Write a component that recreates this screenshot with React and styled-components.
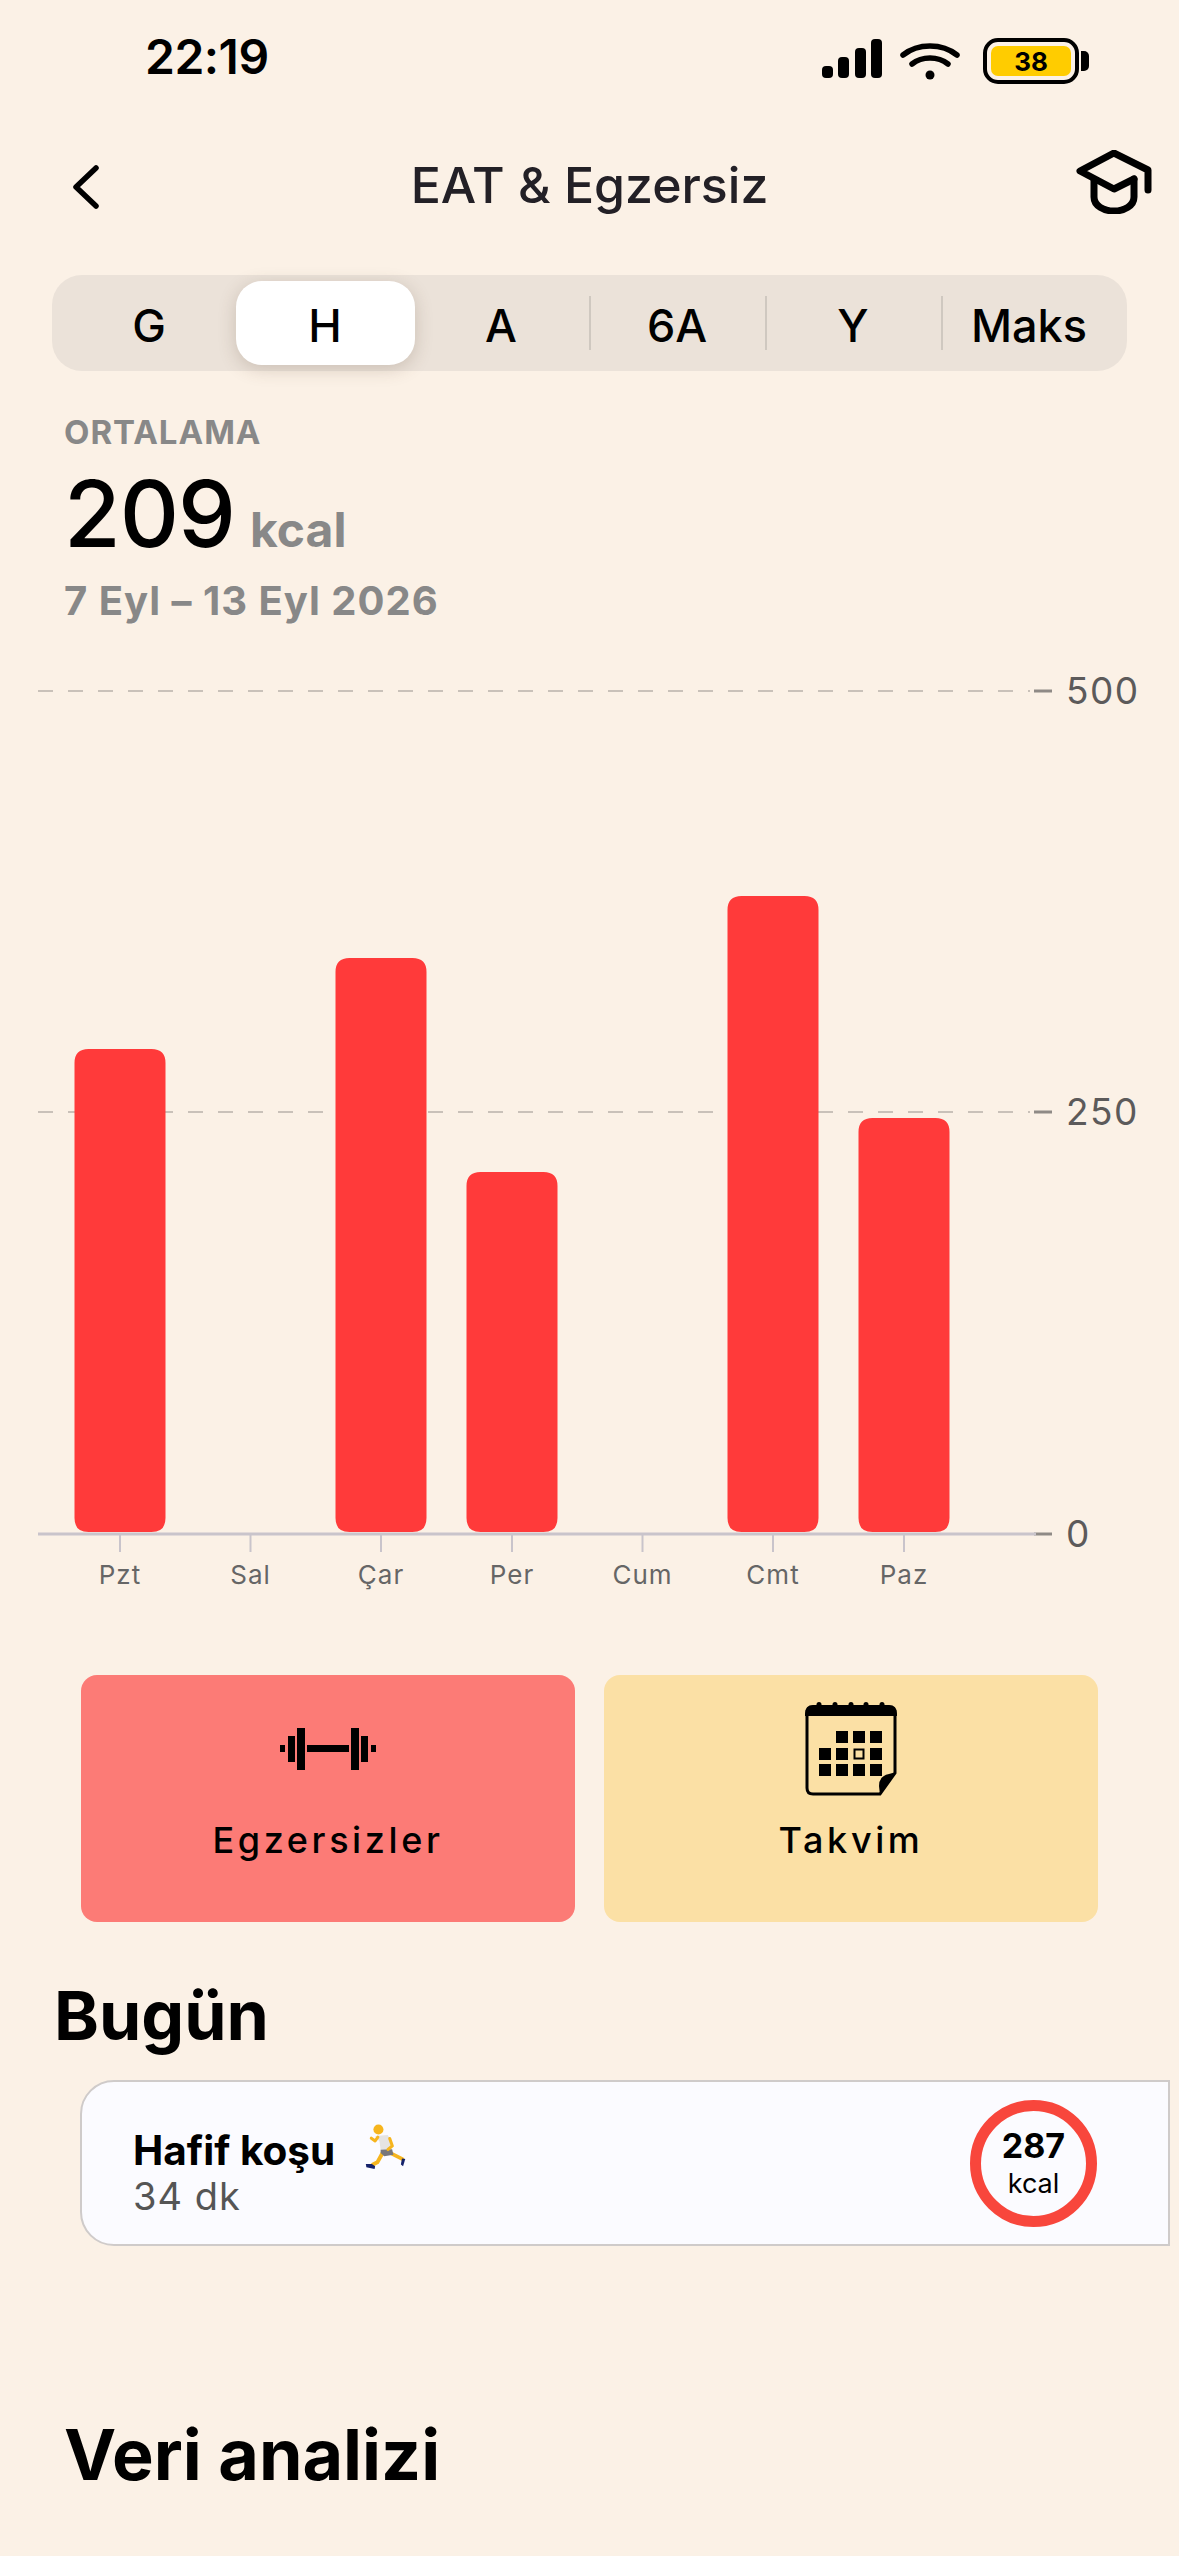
import React from 'react';
import styled, { createGlobalStyle } from 'styled-components';

const GlobalStyle = createGlobalStyle`
  html, body {
    margin: 0;
    padding: 0;
    background: #fbf1e6;
  }
  * { box-sizing: border-box; }
`;

const Page = styled.div`
  width: 1179px;
  height: 2556px;
  overflow: hidden;
  background: #fbf1e6;
  font-family: Inter, "Liberation Sans", sans-serif;
  color: #000;
`;

const StatusBar = styled.div`
  height: 110px;
  padding: 33px 100px 0 145px;
  display: flex;
  justify-content: space-between;
  align-items: flex-start;
`;

const Time = styled.div`
  font-size: 48px;
  line-height: 48px;
  font-weight: 600;
  letter-spacing: -0.5px;
`;

const StatusIcons = styled.div`
  display: flex;
  align-items: flex-start;
  margin-top: 5px;
`;

const Battery = styled.div`
  position: relative;
  width: 96px;
  height: 46px;
  margin-left: 23px;
  border: 4px solid #000;
  border-radius: 15px;
  padding: 4px;
  &::after {
    content: '';
    position: absolute;
    right: -14px;
    top: 9px;
    width: 8px;
    height: 20px;
    background: #000;
    border-radius: 0 5px 5px 0;
  }
`;

const BatteryFill = styled.div`
  height: 100%;
  background: #ffcc00;
  border-radius: 7px;
  display: flex;
  align-items: center;
  justify-content: center;
  font-size: 26px;
  font-weight: 700;
`;

const Header = styled.div`
  height: 64px;
  margin-top: 40px;
  padding: 0 27px 0 72px;
  display: flex;
  align-items: center;
  justify-content: space-between;
  position: relative;
`;

const Title = styled.div`
  position: absolute;
  left: 0;
  right: 0;
  top: 5px;
  text-align: center;
  font-size: 50px;
  line-height: 60px;
  font-weight: 500;
  color: #232026;
`;

const Segment = styled.div`
  width: 1075px;
  height: 96px;
  margin: 61px 0 0 52px;
  padding: 6px 7px 6px 9px;
  display: flex;
  background: #ebe2d9;
  border-radius: 30px;
`;

const SegmentItem = styled.div`
  flex: none;
  width: ${p => (p.$active ? '179px' : '176px')};
  margin: ${p => (p.$active ? '0 -1.5px' : '0')};
  padding-top: 4px;
  display: flex;
  align-items: center;
  justify-content: center;
  font-size: 45px;
  font-weight: 500;
  position: relative;
  background: ${p => (p.$active ? '#fff' : 'transparent')};
  border-radius: ${p => (p.$active ? '26px' : '0')};
  box-shadow: ${p => (p.$active ? '0 4px 18px rgba(90, 70, 50, 0.22)' : 'none')};
  &::before {
    content: '';
    display: ${p => (p.$divider ? 'block' : 'none')};
    position: absolute;
    left: 0;
    top: 15px;
    bottom: 15px;
    width: 2px;
    background: #cfc8c0;
  }
`;

const Summary = styled.div`
  padding-left: 64px;
  margin-top: 41px;
`;

const SummaryLabel = styled.div`
  font-size: 33px;
  line-height: 40px;
  font-weight: 700;
  letter-spacing: 1px;
  color: #888;
`;

const SummaryValue = styled.div`
  display: flex;
  align-items: baseline;
  margin-top: 8px;
  font-size: 92px;
  line-height: 108px;
  font-weight: 500;
  letter-spacing: -1px;
`;

const SummaryUnit = styled.span`
  margin-left: 15px;
  font-size: 48px;
  font-weight: 700;
  letter-spacing: 0;
  color: #888;
`;

const SummaryRange = styled.div`
  margin-top: -6px;
  font-size: 40px;
  line-height: 46px;
  font-weight: 700;
  letter-spacing: 1px;
  color: #888;
`;

const ChartSvg = styled.svg`
  display: block;
  width: 1179px;
  height: 960px;
  margin-top: 38px;
`;

const Actions = styled.div`
  display: flex;
  gap: 29px;
  padding-left: 81px;
  margin-top: 53px;
`;

const ActionCard = styled.div`
  width: 494px;
  height: 247px;
  border-radius: 16px;
  background: ${p => p.$bg};
  display: flex;
  flex-direction: column;
  align-items: center;
`;

const ActionIcon = styled.div`
  height: 123px;
  margin-top: 12px;
  display: flex;
  align-items: center;
  justify-content: center;
`;

const ActionLabel = styled.div`
  margin-top: 9px;
  font-size: 36px;
  line-height: 42px;
  font-weight: 500;
  letter-spacing: 3.6px;
`;

const SectionTitle = styled.div`
  font-size: 68px;
  line-height: 78px;
  font-weight: 700;
  margin: 54px 0 0 54px;
`;

const ActivityCard = styled.div`
  width: 1090px;
  height: 166px;
  margin: 26px 0 0 80px;
  padding: 0 54px 0 51px;
  display: flex;
  align-items: center;
  justify-content: space-between;
  background: #fbfbff;
  border: 2px solid #cfcbca;
  border-radius: 34px 0 0 34px;
`;

const ActivityText = styled.div`
  padding-top: 20px;
`;

const ActivityName = styled.div`
  display: flex;
  align-items: center;
  height: 46px;
  font-size: 40.5px;
  line-height: 46px;
  font-weight: 700;
`;

const ActivityDuration = styled.div`
  font-size: 38px;
  line-height: 44px;
  color: #555;
  letter-spacing: 1px;
`;

const Ring = styled.div`
  width: 127px;
  height: 127px;
  margin-right: 17px;
  border: 11px solid #f8463c;
  border-radius: 50%;
  display: flex;
  flex-direction: column;
  align-items: center;
  justify-content: center;
`;

const RingValue = styled.div`
  font-size: 34px;
  line-height: 40px;
  font-weight: 700;
`;

const RingUnit = styled.div`
  font-size: 27px;
  line-height: 32px;
  margin-top: 2px;
`;

const AnalysisTitle = styled.div`
  font-size: 70px;
  line-height: 82px;
  font-weight: 700;
  margin: 168px 0 0 64px;
`;

const days = [
  { label: 'Pzt', x: 120, top: 1048 },
  { label: 'Sal', x: 250.5 },
  { label: 'Çar', x: 381, top: 957 },
  { label: 'Per', x: 512, top: 1171 },
  { label: 'Cum', x: 642.5 },
  { label: 'Cmt', x: 773, top: 895 },
  { label: 'Paz', x: 904, top: 1117 },
];

// svg y = page y - 660
const grid = [
  { value: '500', y: 29, dashed: true },
  { value: '250', y: 450, dashed: true },
  { value: '0', y: 872, dashed: false },
];

const Chart = () => (
  <ChartSvg viewBox="0 0 1179 960">
    {grid.map(g => (
      <g key={g.value}>
        {g.dashed && (
          <line x1="38" x2="1030" y1={g.y} y2={g.y} stroke="#c9c1b9" strokeWidth="2" strokeDasharray="15 15" />
        )}
        <line x1="1034" x2="1052" y1={g.y} y2={g.y} stroke="#8f8a86" strokeWidth="3" />
        <text x="1066" y={g.y + 13} fontSize="37" fill="#5c5a5a" letterSpacing="1.5" fontFamily="Inter, sans-serif">
          {g.value}
        </text>
      </g>
    ))}
    <line x1="38" x2="1036" y1="872" y2="872" stroke="#c9c4cb" strokeWidth="3" />
    {days.map(d => (
      <g key={d.label}>
        <line x1={d.x} x2={d.x} y1="873" y2="890" stroke="#c9c4cb" strokeWidth="2" />
        <text x={d.x} y="922" fontSize="26" fill="#666" textAnchor="middle" letterSpacing="1" fontFamily="Inter, sans-serif">
          {d.label}
        </text>
        {d.top && (
          <path
            d={`M${d.x - 45.5} 870 V${d.top - 661 + 14} q0 -14 14 -14 h63 q14 0 14 14 V856 q0 14 -14 14 h-63 q-14 0 -14 -14 Z`}
            fill="#ff3a3a"
          />
        )}
      </g>
    ))}
  </ChartSvg>
);

const SignalIcon = () => (
  <svg width="60" height="39" viewBox="0 0 60 39" style={{ marginTop: 1 }}>
    <rect x="0" y="27" width="11" height="12" rx="4" />
    <rect x="16" y="18" width="11" height="21" rx="4" />
    <rect x="33" y="9" width="11" height="30" rx="4" />
    <rect x="49" y="0" width="11" height="39" rx="4" />
  </svg>
);

const WifiIcon = () => (
  <svg width="60" height="40" viewBox="0 0 60 40" style={{ marginLeft: 18, marginTop: 4 }} fill="none" stroke="#000" strokeLinecap="round" strokeWidth="5.5">
    <path d="M3 13 C18 1 42 1 57 13" />
    <path d="M12 22 C22 14 38 14 48 22" />
    <circle cx="30" cy="33" r="4.5" fill="#000" stroke="none" />
  </svg>
);

const BackIcon = () => (
  <svg width="28" height="44" viewBox="0 0 28 44" fill="none" stroke="#000" strokeWidth="5.5" strokeLinecap="round" strokeLinejoin="round" style={{ marginTop: 10 }}>
    <path d="M24 3 L4 22 L24 41" />
  </svg>
);

const CapIcon = () => (
  <svg width="76" height="64" viewBox="0 0 76 64" fill="none" stroke="#000" strokeWidth="7" strokeLinecap="round" strokeLinejoin="round">
    <path d="M72 40 V20 L38 3 L4 21 L38 39 L58 29" />
    <path d="M18 30 V47 C18 56 28 61 38 61 C48 61 58 56 58 47 V29" />
  </svg>
);

const DumbbellIcon = () => (
  <svg width="96" height="42" viewBox="0 0 96 42" fill="#000">
    <rect x="0" y="17" width="5" height="7" />
    <rect x="8" y="8" width="7" height="26" />
    <rect x="17" y="0" width="8" height="42" />
    <rect x="27" y="17" width="42" height="7" />
    <rect x="71" y="0" width="8" height="42" />
    <rect x="81" y="8" width="7" height="26" />
    <rect x="91" y="17" width="5" height="7" />
  </svg>
);

const calendarCells = [
  [31, 30], [48, 30], [65, 30],
  [14, 47], [31, 47], [65, 47],
  [14, 63], [31, 63], [48, 63], [65, 63],
];

const CalendarIcon = () => (
  <svg width="92" height="95" viewBox="0 0 92 95">
    <path d="M8 6 H84 Q90 6 90 12 V72 L75 93 H8 Q2 93 2 87 V12 Q2 6 8 6 Z" fill="none" stroke="#000" strokeWidth="3" />
    <path d="M8 4 H84 Q92 4 92 13 V15 H0 V13 Q0 4 8 4 Z" />
    {[12, 28, 44, 59, 75].map(x => (
      <circle key={x} cx={x + 2} cy="3.5" r="2.5" />
    ))}
    {calendarCells.map(([x, y]) => (
      <rect key={`${x}-${y}`} x={x} y={y} width="12" height="12" />
    ))}
    <rect x="49.5" y="48.5" width="9" height="9" fill="none" stroke="#000" strokeWidth="2" />
    <path d="M91 71 L75 94 L74 85 Q74 75 84 73 Z" />
  </svg>
);

const RunnerIcon = () => (
  <svg width="42" height="46" viewBox="0 0 38 42" style={{ marginLeft: 29, marginTop: -8 }}>
    <path d="M17 26 L12 35 L8 37" fill="none" stroke="#f6b51e" strokeWidth="3.6" strokeLinecap="round" strokeLinejoin="round" />
    <path d="M25 27 L35 32" fill="none" stroke="#f6b51e" strokeWidth="3.4" strokeLinecap="round" />
    <path d="M1.5 36.5 L7 36.5 L10 38.5 L9.5 41 L2 39.5 Z" fill="#15226b" />
    <path d="M34.5 31.5 L37.5 32 L35.5 38.5 L33.5 37 Z" fill="#15226b" />
    <path d="M10 11 L21.5 10 L25 16.5 L24.5 24 L15 24 L14 16 Z" fill="#e6e4e3" />
    <path d="M15 23.5 L25.5 23 L26.7 28 L18.3 29.5 L15 26.5 Z" fill="#77767a" />
    <path d="M12.5 12 L10 15.5 L6.5 13" fill="none" stroke="#f6b51e" strokeWidth="2.8" strokeLinecap="round" strokeLinejoin="round" />
    <path d="M23.3 13.3 L25.7 20 L21.7 23.3" fill="none" stroke="#f6b51e" strokeWidth="2.8" strokeLinecap="round" strokeLinejoin="round" />
    <circle cx="13" cy="5" r="4.6" fill="#f6b51e" />
  </svg>
);

const ranges = ['G', 'H', 'A', '6A', 'Y', 'Maks'];

const App = () => (
  <Page>
    <GlobalStyle />
    <StatusBar>
      <Time>22:19</Time>
      <StatusIcons>
        <SignalIcon />
        <WifiIcon />
        <Battery>
          <BatteryFill>38</BatteryFill>
        </Battery>
      </StatusIcons>
    </StatusBar>
    <Header>
      <BackIcon />
      <Title>EAT &amp; Egzersiz</Title>
      <CapIcon />
    </Header>
    <Segment>
      {ranges.map((r, i) => (
        <SegmentItem key={r} $active={r === 'H'} $divider={i > 2}>{r}</SegmentItem>
      ))}
    </Segment>
    <Summary>
      <SummaryLabel>ORTALAMA</SummaryLabel>
      <SummaryValue>209<SummaryUnit>kcal</SummaryUnit></SummaryValue>
      <SummaryRange>7 Eyl – 13 Eyl 2026</SummaryRange>
    </Summary>
    <Chart />
    <Actions>
      <ActionCard $bg="#fc7b76">
        <ActionIcon><DumbbellIcon /></ActionIcon>
        <ActionLabel>Egzersizler</ActionLabel>
      </ActionCard>
      <ActionCard $bg="#fbe0a5">
        <ActionIcon><CalendarIcon /></ActionIcon>
        <ActionLabel>Takvim</ActionLabel>
      </ActionCard>
    </Actions>
    <SectionTitle>Bugün</SectionTitle>
    <ActivityCard>
      <ActivityText>
        <ActivityName>Hafif koşu<RunnerIcon /></ActivityName>
        <ActivityDuration>34 dk</ActivityDuration>
      </ActivityText>
      <Ring>
        <RingValue>287</RingValue>
        <RingUnit>kcal</RingUnit>
      </Ring>
    </ActivityCard>
    <AnalysisTitle>Veri analizi</AnalysisTitle>
  </Page>
);

export default App;
